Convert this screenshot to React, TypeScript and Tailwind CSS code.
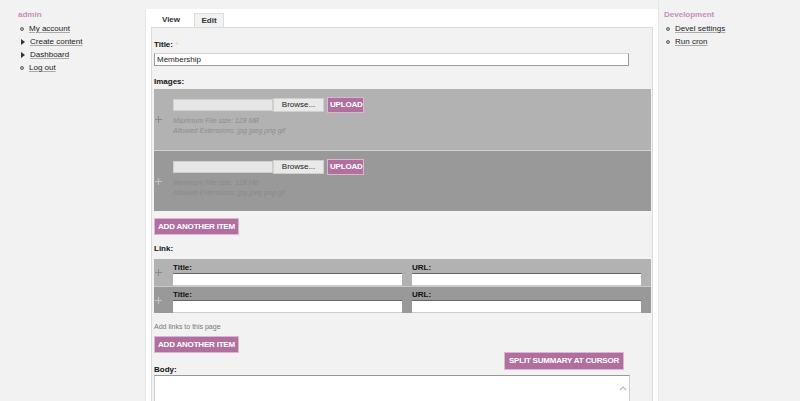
import React from 'react'

const font = "font-['Liberation_Sans',Arial,sans-serif]"

function Bullet({ kind }: { kind: 'leaf' | 'collapsed' }) {
  if (kind === 'collapsed') {
    return (
      <span className="w-0 h-0 border-y-[3px] border-y-transparent border-l-[4px] border-l-[#333] mr-[5px] ml-[1px]" />
    )
  }
  return <span className="w-[4px] h-[4px] rounded-full border border-[#666] bg-[#bbb] mr-[5px]" />
}

function MenuBlock({ title, items }: { title: string; items: { label: string; kind: 'leaf' | 'collapsed' }[] }) {
  return (
    <div>
      <h2 className="text-[#c490b8] font-bold text-[8px] leading-[10px] mb-[4px]">{title}</h2>
      <ul className="space-y-[3px]">
        {items.map((it) => (
          <li key={it.label} className="flex items-center h-[10px] pl-[2px]">
            <Bullet kind={it.kind} />
            <span className="text-[#222] text-[8px] leading-[10px] underline decoration-[#aaa]">{it.label}</span>
          </li>
        ))}
      </ul>
    </div>
  )
}

function PinkButton({ children, className = '' }: { children: React.ReactNode; className?: string }) {
  return (
    <button className={`bg-[#b06f9f] border border-[#dcb5d2] text-white font-bold text-[8px] leading-[10px] px-[2px] whitespace-nowrap tracking-[-0.2px] ${className}`}>
      {children}
    </button>
  )
}

function Handle({ light }: { light: boolean }) {
  return (
    <div className="w-[19px] flex items-center pl-[1px]">
      <svg width="7" height="7" viewBox="0 0 7 7" className={light ? 'text-[#8c8c8c]' : 'text-[#c4c4c4]'}>
        <path d="M3.5 0 V7 M0 3.5 H7" stroke="currentColor" strokeWidth="1" fill="none" />
      </svg>
    </div>
  )
}

function ImageRow({ light }: { light: boolean }) {
  return (
    <div className={`flex h-[61px] ${light ? 'bg-[#b2b2b2]' : 'bg-[#999999] border-t border-[#d0d0d0]'}`}>
      <Handle light={light} />
      <div className="pt-[8px]">
        <div className="flex items-center">
          <div className="w-[100px] h-[12px] bg-[#e6e6e6] border border-[#cfcfcf]" />
          <div className="w-[51px] h-[14px] bg-[#e9e9e9] border border-[#cfcfcf] text-[8px] leading-[12px] text-[#222] text-center">Browse...</div>
          <PinkButton className="ml-[3px] h-[16px] w-[37px]">UPLOAD</PinkButton>
        </div>
        <div className={`mt-[3px] italic text-[7px] leading-[10px] ${light ? 'text-[#8e8e8e]' : 'text-[#8a8a8a]'}`}>
          <div>Maximum File size: 128 MB</div>
          <div>Allowed Extensions: jpg jpeg png gif</div>
        </div>
      </div>
    </div>
  )
}

function LinkRow({ light }: { light: boolean }) {
  return (
    <div className={`flex h-[27px] ${light ? 'bg-[#b2b2b2]' : 'bg-[#999999] border-t border-[#c8c8c8]'}`}>
      <Handle light={light} />
      <div className="flex gap-[10px] items-end">
        <div>
          <div className="text-[8px] font-bold leading-[9px] text-[#111] mb-[1px]">Title:</div>
          <div className="w-[229px] h-[13px] bg-white border-t border-[#666] border-b border-b-[#ccc]" />
        </div>
        <div>
          <div className="text-[8px] font-bold leading-[9px] text-[#111] mb-[1px]">URL:</div>
          <div className="w-[229px] h-[13px] bg-white border-t border-[#666] border-b border-b-[#ccc]" />
        </div>
      </div>
    </div>
  )
}

export default function App() {
  return (
    <div className={`w-[800px] h-[401px] overflow-hidden bg-[#f2f2f2] flex ${font}`}>
      {/* left sidebar */}
      <aside className="w-[145px] pl-[18px] pt-[10px]">
        <MenuBlock
          title="admin"
          items={[
            { label: 'My account', kind: 'leaf' },
            { label: 'Create content', kind: 'collapsed' },
            { label: 'Dashboard', kind: 'collapsed' },
            { label: 'Log out', kind: 'leaf' },
          ]}
        />
      </aside>

      {/* main */}
      <main className="w-[513px] mt-[9px] bg-white border-l border-[#e6e6e6] px-[5px] pt-[4px]">
        <div className="flex gap-[8px] pl-[5px]">
          <div className="h-[14px] w-[30px] text-[8px] font-bold leading-[14px] text-center text-[#333]">View</div>
          <div className="h-[14px] w-[30px] text-[8px] font-bold leading-[14px] text-center text-[#333] bg-[#f2f2f2] border border-b-0 border-[#ddd]">Edit</div>
        </div>
        <div className="bg-[#f2f2f2] border border-[#dcdcdc] pl-[2px] pr-[2px] pt-[12px] h-[400px]">
          <label className="block text-[8px] font-bold leading-[10px] text-[#111]">
            Title: <span className="text-[#e8e2a0]">*</span>
          </label>
          <div className="mt-[3px] w-[475px] h-[13px] bg-white border border-[#9a9a9a] border-t-[#d0d0d0] text-[8px] leading-[11px] pl-[2px] text-[#222]">
            Membership
          </div>

          <div className="mt-[11px] text-[8px] font-bold leading-[10px] text-[#111]">Images:</div>
          <div className="mt-[2px] w-[497px]">
            <ImageRow light />
            <ImageRow light={false} />
          </div>
          <PinkButton className="block mt-[7px] h-[17px] px-[3px]">ADD ANOTHER ITEM</PinkButton>

          <div className="mt-[9px] text-[8px] font-bold leading-[10px] text-[#111]">Link:</div>
          <div className="mt-[5px] w-[497px]">
            <LinkRow light />
            <LinkRow light={false} />
          </div>
          <div className="mt-[9px] text-[7px] leading-[10px] text-[#777]">Add links to this page</div>
          <PinkButton className="block mt-[4px] h-[17px] px-[3px]">ADD ANOTHER ITEM</PinkButton>

          <div className="flex justify-end w-[470px] -mt-[1px]">
            <PinkButton className="h-[18px] px-[4px]">SPLIT SUMMARY AT CURSOR</PinkButton>
          </div>
          <div className="-mt-[5px] text-[8px] font-bold leading-[10px] text-[#111]">Body:</div>
          <div className="relative mt-[0px] w-[476px] h-[40px] bg-white border border-[#cfcfcf] border-t-[#999]">
            <svg width="8" height="5" viewBox="0 0 8 5" className="absolute right-[2px] top-[10px]">
              <path d="M1 4 L4 1 L7 4" stroke="#bbb" strokeWidth="1.2" fill="none" />
            </svg>
          </div>
        </div>
      </main>

      {/* right sidebar */}
      <aside className="pl-[5px] pt-[10px] border-l border-[#e8e8e8]">
        <MenuBlock
          title="Development"
          items={[
            { label: 'Devel settings', kind: 'leaf' },
            { label: 'Run cron', kind: 'leaf' },
          ]}
        />
      </aside>
    </div>
  )
}
